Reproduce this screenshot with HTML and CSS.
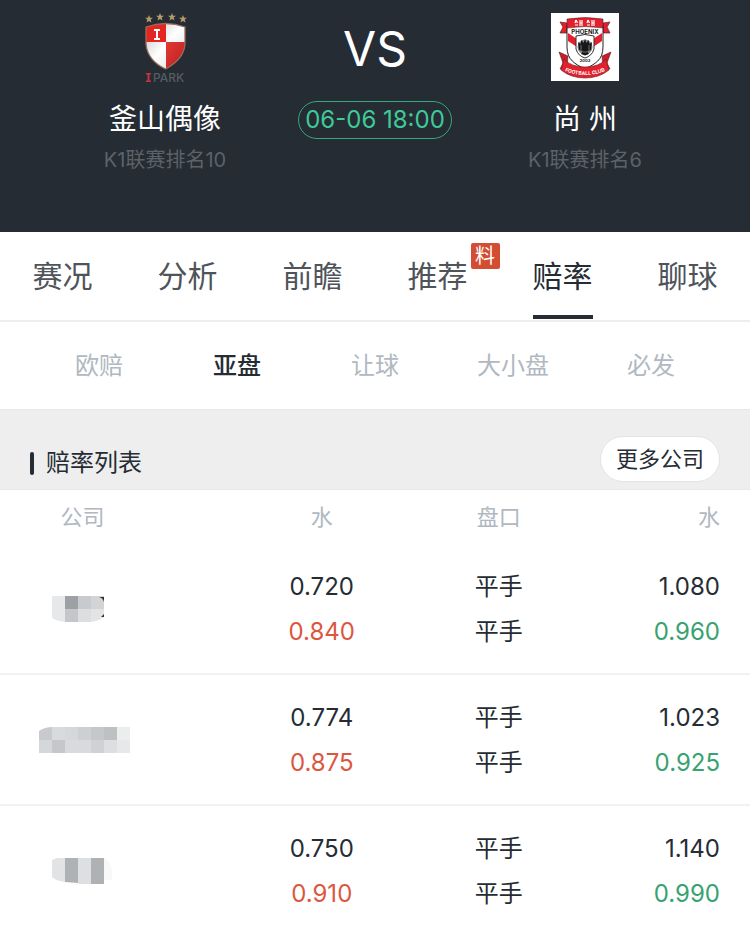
FILE: index.html
```html
<!DOCTYPE html>
<html lang="zh-CN">
<head>
<meta charset="utf-8">
<meta name="viewport" content="width=device-width, initial-scale=1">
<title>赔率</title>
<link rel="stylesheet" href="styles.css">
</head>
<body>
<header class="match">
  <section class="team">
    <svg class="logo" viewBox="0 0 68 68" aria-hidden="true">
      <defs>
        <linearGradient id="silver" x1="0" y1="0" x2="1" y2="1"><stop offset="0" stop-color="#bbb"/><stop offset=".5" stop-color="#fff"/><stop offset="1" stop-color="#d8d4d4"/></linearGradient>
        <linearGradient id="ruby" x1="0" y1="0" x2="1" y2="1"><stop offset="0" stop-color="#e33a35"/><stop offset="1" stop-color="#b51d20"/></linearGradient>
        <clipPath id="shield"><path d="M15 14Q35 7 54 14V31C53 44 44 51 34.500 56C24 51 16 43 15 31Z"/></clipPath>
        <path id="star" d="M0-4L1.100-1.300L4-1.200L1.700.600L2.500 3.500L0 1.900L-2.500 3.500L-1.700.600L-4-1.200L-1.100-1.300Z"/>
      </defs>
      <g fill="#b59b69"><use href="#star" x="18" y="6"/><use href="#star" x="29" y="4"/><use href="#star" x="41" y="4"/><use href="#star" x="52" y="6"/></g>
      <g clip-path="url(#shield)">
        <path fill="url(#silver)" d="M14 8h41v49H14z"/>
        <path fill="#e5251f" d="M14 8h21v21H14z"/>
        <path fill="url(#ruby)" d="M35 29h20v28H35z"/>
      </g>
      <path fill="none" stroke="#9a6b5c" stroke-width="1.300" d="M15 14Q35 7 54 14V31C53 44 44 51 34.500 56C24 51 16 43 15 31Z"/>
      <path fill="#fff" d="M23 16h6v2h-2v7h2v2h-6v-2h2v-7h-2z"/>
      <path fill="#c8323a" d="M15 60h5v1.500h-1.500v6H20V69h-5v-1.500h1.500v-6H15z"/>
      <text class="logo-word" x="22" y="69">PARK</text>
    </svg>
    <h2 class="name">釜山偶像</h2>
    <p class="rank">K1联赛排名10</p>
  </section>
  <section class="versus">
    <p class="vs">VS</p>
    <time class="kickoff">06-06 18:00</time>
  </section>
  <section class="team">
    <svg class="logo" viewBox="0 0 68 68" aria-hidden="true">
      <path fill="#fff" d="M0 0h68v68H0z"/>
      <path fill="#e3202b" stroke="#5c2326" stroke-width=".7" d="M9 9l7 1v10H9l3-6zM59 9l-7 1v10h7l-3-6z"/>
      <path fill="#fff" stroke="#222" stroke-width="1" d="M16 12H52V34C52 47 44 51 34 56C24 51 16 47 16 34Z"/>
      <path fill="#e3202b" d="M17 20l9 6v8l-9-6zM51 20l-9 6v8l9-6z"/>
      <path fill="#e3202b" stroke="#5c2326" stroke-width=".6" d="M16 6Q34 3 52 6V15Q34 12 16 15Z"/>
      <path fill="none" stroke="#fff" stroke-width="1.200" d="M25 7l-1 3M25 7l1.500 3M24 12h3M29 7v6M31 7v6M29 10h2M37 7l-1 3M37 7l1.500 3M36 12h3M41 7v6M43 7v6M41 10h2"/>
      <path fill="#fff" stroke="#333" stroke-width="1" d="M25 23Q34 20 43 23V36Q41 43 34 45Q27 43 25 36Z"/>
      <circle cx="34" cy="34" r="7.500" fill="#888"/>
      <path fill="#151719" d="M34 26l1.500 4 2-3 1 4 2.500-2-1 8-4 1 2 3-4 1.500-4-1.500 2-3-4-1-1-8 2.500 2 1-4 2 3z"/>
      <path fill="none" stroke="#aaa" stroke-width=".6" d="M30 32v5M38 32v5M32 39h4"/>
      <text class="crest-word" x="34" y="21">PHOENIX</text>
      <text class="crest-year" x="34" y="49">2003</text>
      <path fill="#c91f2a" stroke="#5c2326" stroke-width=".6" d="M8 39l9 4-1 12-7 1 3-6zM60 39l-9 4 1 12 7 1-3-6z"/>
      <path fill="#e3202b" stroke="#5c2326" stroke-width=".6" d="M13 46Q20 54 34 54T55 46L58 57Q48 65 34 65T10 57Z"/>
      <path id="ribbon" fill="none" d="M12 57Q22 62 34 62T56 57"/>
      <text class="ribbon-word"><textPath href="#ribbon" startOffset="50%">FOOTBALL CLUB</textPath></text>
    </svg>
    <h2 class="name">尚 州</h2>
    <p class="rank">K1联赛排名6</p>
  </section>
</header>

<nav class="tabs">
  <a href="#">赛况</a>
  <a href="#">分析</a>
  <a href="#">前瞻</a>
  <a href="#"><span class="badged">推荐<span class="badge">料</span></span></a>
  <a href="#" class="active" aria-current="page">赔率</a>
  <a href="#">聊球</a>
</nav>

<nav class="subtabs">
  <a href="#">欧赔</a>
  <a href="#" class="active" aria-current="page">亚盘</a>
  <a href="#">让球</a>
  <a href="#">大小盘</a>
  <a href="#">必发</a>
</nav>

<main>
  <div class="list-head">
    <h1>赔率列表</h1>
    <button type="button">更多公司</button>
  </div>
  <table class="odds">
    <colgroup><col class="c-company"><col class="c-home"><col class="c-line"><col class="c-away"></colgroup>
    <thead>
      <tr><th>公司</th><th class="home">水</th><th>盘口</th><th class="away">水</th></tr>
    </thead>
    <tbody>
      <tr>
        <td class="company">
          <svg viewBox="0 0 91 26" aria-hidden="true">
            <path fill="#e7e8ea" d="M13 0h13v26q-8-1-13-4z"/><path fill="#9da0a5" d="M26 0h13v13H26z"/><path fill="#c4c6c9" d="M26 13h13v13H26z"/><path fill="#c8cbce" d="M39 0h13v13H39z"/><path fill="#d2d4d6" d="M52 0h13v13H52z"/><path fill="#dcdee0" d="M39 13h13v13H39z"/><path fill="#e3e4e6" d="M52 13h13v8q-5 4-13 5z"/><path fill="#333" d="M60 1h5v5q-1-4-5-5zM65 18v3h-3z"/>
          </svg>
        </td>
        <td class="home"><div>0.720</div><div class="up">0.840</div></td>
        <td><div>平手</div><div>平手</div></td>
        <td class="away"><div>1.080</div><div class="down">0.960</div></td>
      </tr>
      <tr>
        <td class="company">
          <svg viewBox="0 0 91 26" aria-hidden="true">
            <path fill="#c9cacd" d="M0 4Q6 0 13 0v13H0z"/><path fill="#d9dadd" d="M13 0h13v13H13z"/><path fill="#d5d7d9" d="M26 0h13v13H26zM0 13h13v13H0z"/><path fill="#cdd0d2" d="M39 0h13v13H39z"/><path fill="#c5c7ca" d="M52 0h13v13H52zM13 13h13v13H13z"/><path fill="#bec0c3" d="M65 0h13v13H65z"/><path fill="#eceded" d="M78 0h13v13H78z"/><path fill="#d8dadd" d="M26 13h26v13H26z"/><path fill="#cfd1d4" d="M52 13h13v13H52z"/><path fill="#dddee0" d="M65 13h13v13H65z"/><path fill="#e7e8ea" d="M78 13h13v13H78z"/>
          </svg>
        </td>
        <td class="home"><div>0.774</div><div class="up">0.875</div></td>
        <td><div>平手</div><div>平手</div></td>
        <td class="away"><div>1.023</div><div class="down">0.925</div></td>
      </tr>
      <tr>
        <td class="company">
          <svg viewBox="0 0 91 26" aria-hidden="true">
            <path fill="#e2e3e5" d="M13 2l5-2h8v24q-9-1-13-5z"/><path fill="#afb2b4" d="M26 0h13v25l-13-1z"/><path fill="#dddfe1" d="M39 0h13v26H39z"/><path fill="#afb2b4" d="M52 0h13v26H52z"/><path fill="#f8f8f9" d="M65 0q7 3 8 13v9h-8z"/>
          </svg>
        </td>
        <td class="home"><div>0.750</div><div class="up">0.910</div></td>
        <td><div>平手</div><div>平手</div></td>
        <td class="away"><div>1.140</div><div class="down">0.990</div></td>
      </tr>
    </tbody>
  </table>
</main>
</body>
</html>
```
FILE: styles.css
```css
* {
  box-sizing: border-box;
}

body {
  margin: 0;
  background: #fff;
  color: #252c34;
  font-family: Inter, "Noto Sans CJK SC", sans-serif;
  font-size: 24px;
  font-weight: 400;
}

h1, h2, p {
  margin: 0;
  font-weight: 400;
}

a {
  color: inherit;
  text-decoration: none;
}

.match {
  display: grid;
  grid-template-columns: repeat(3, 1fr);
  padding: 13px 8% 58px;
  background: #252c34;
  text-align: center;
}

.team,
.versus {
  display: flex;
  flex-direction: column;
  align-items: center;
}

.logo {
  width: 68px;
  height: 68px;
  overflow: visible;
}

.logo-word {
  font: 500 12px Inter, sans-serif;
  fill: #575c62;
}

.crest-word {
  font: 700 6px Inter, sans-serif;
  text-anchor: middle;
  fill: #222;
}

.crest-year {
  font: 700 4px Inter, sans-serif;
  text-anchor: middle;
  fill: #222;
}

.ribbon-word {
  font: 700 5px Inter, sans-serif;
  text-anchor: middle;
  fill: #fff;
}

.name {
  margin-top: 18px;
  color: #fff;
  font-size: 28px;
  line-height: 40px;
}

.rank {
  margin-top: 7px;
  color: #5c6268;
  font-size: 20px;
  line-height: 28px;
}

.vs {
  margin-top: 6px;
  color: #fff;
  font-size: 48px;
  line-height: 60px;
}

.kickoff {
  margin-top: 22px;
  padding: 0 6px;
  border: 1px solid #35a87c;
  border-radius: 20px;
  color: #3fc998;
  font-size: 24px;
  line-height: 36px;
  white-space: nowrap;
}

.tabs {
  display: grid;
  grid-template-columns: repeat(6, 1fr);
  border-bottom: 2px solid #eee;
  color: #4f545a;
  font-size: 30px;
  line-height: 88px;
  text-align: center;
}

.tabs .active {
  justify-self: center;
  height: 87px;
  border-bottom: 4px solid #252c34;
  color: #252c34;
}

.badged {
  position: relative;
}

.badge {
  position: absolute;
  left: 100%;
  top: -15px;
  width: 29px;
  margin-left: 3px;
  border-radius: 2px;
  background: #d34d33;
  color: #fff;
  font-size: 20px;
  line-height: 26px;
}

.subtabs {
  display: grid;
  grid-template-columns: repeat(5, 1fr);
  padding: 0 4%;
  color: #b0b8c1;
  line-height: 87px;
  text-align: center;
}

.subtabs .active {
  color: #252c34;
  font-weight: 500;
}

.list-head {
  display: flex;
  align-items: center;
  justify-content: space-between;
  padding: 26px 30px 7px;
  border: solid #e8e8e8;
  border-width: 1px 0;
  background: #eee;
}

.list-head h1 {
  display: flex;
  align-items: center;
  gap: 12px;
  padding-top: 8px;
  font-size: 24px;
  line-height: 36px;
}

.list-head h1::before {
  content: "";
  width: 4px;
  height: 23px;
  border-radius: 2px;
  background: #252c34;
}

.list-head button {
  padding: 0 15px;
  border: 1px solid #e4e4e4;
  border-radius: 23px;
  background: #fff;
  color: inherit;
  font: inherit;
  font-size: 22px;
  line-height: 44px;
}

.odds {
  width: 100%;
  border-collapse: collapse;
  table-layout: fixed;
}

.c-company,
.c-away {
  width: 22%;
}

.c-home {
  width: 33%;
}

.c-line {
  width: 23%;
}

.odds th {
  padding: 0;
  color: #b0b8c1;
  font-size: 22px;
  font-weight: 400;
  line-height: 54px;
}

.odds td {
  padding: 20px 0 19px;
  border-bottom: 2px solid #f2f2f2;
  line-height: 45px;
  text-align: center;
}

.odds tr:last-child td {
  border-bottom: 0;
}

.odds .home {
  padding-left: 66px;
}

.odds .away {
  padding-right: 30px;
  text-align: right;
}

.odds .company {
  padding-left: 4px;
}

.company svg {
  display: block;
  width: 91px;
  margin: 0 auto;
}

.up {
  color: #dc573f;
}

.down {
  color: #38a271;
}
```
